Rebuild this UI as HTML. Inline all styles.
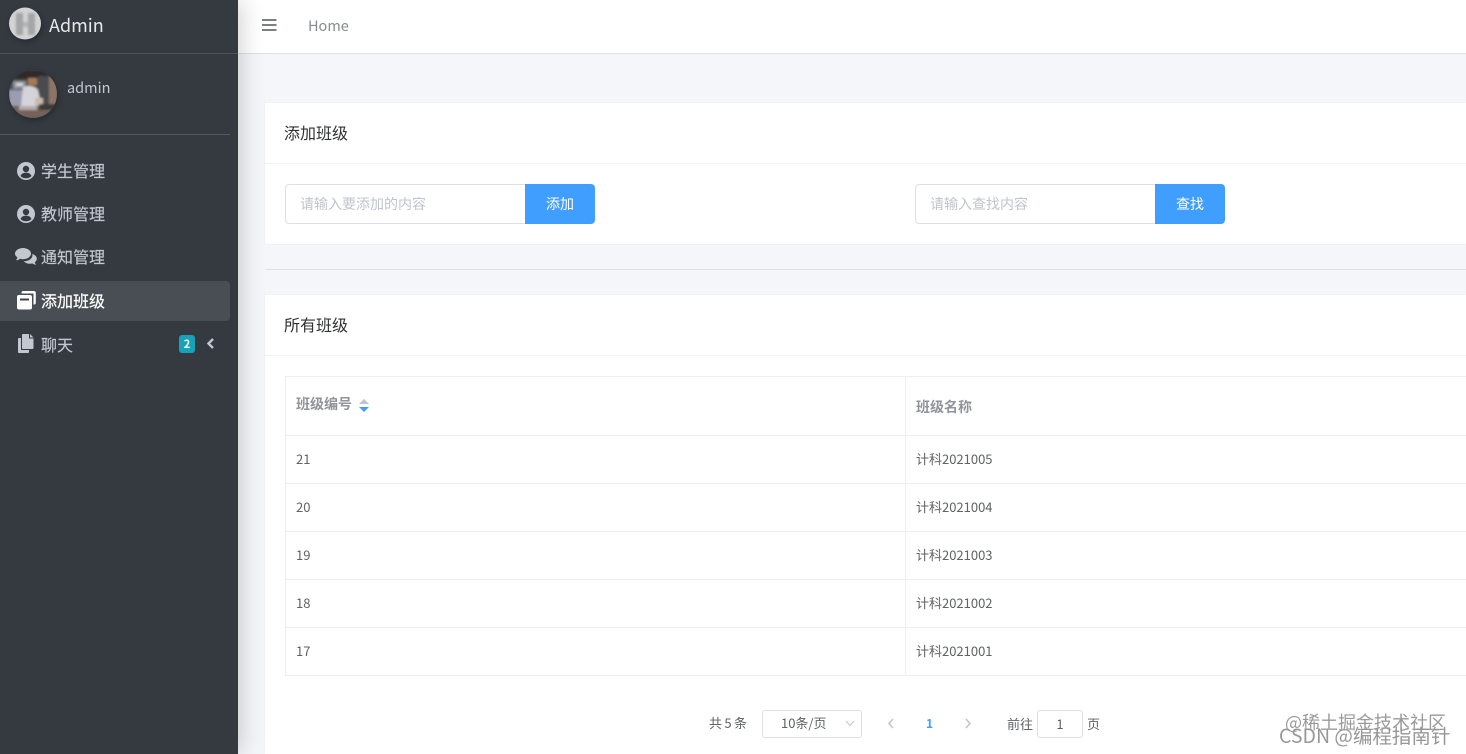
<!DOCTYPE html>
<html lang="zh"><head><meta charset="utf-8"><title>Admin</title>
<style>
*{box-sizing:border-box}
html,body{margin:0;padding:0;width:1466px;height:754px;overflow:hidden}
body{position:relative;background:#f4f6f9;font-family:"Noto Sans CJK SC","Liberation Sans",sans-serif;color:#212529}
#wrap{position:absolute;left:0;top:0;width:1466px;height:754px;overflow:hidden}
.a{position:absolute;white-space:nowrap}
#side{left:0;top:0;width:238px;height:754px;background:#343a40;box-shadow:2px 0 24px rgba(0,0,0,.2)}
.mi{left:41px;font-size:16px;line-height:24px;color:#c2c7d0;-webkit-text-stroke:.15px #c2c7d0}
.ic{position:absolute}
.card{left:265px;width:1201px;background:#fff;box-shadow:0 0 2px rgba(0,0,0,.06)}
.t{font-size:16px;line-height:22px;color:#303133}
.inp{height:40px;width:241px;background:#fff;border:1px solid #dcdfe6;border-radius:4px 0 0 4px;font-size:14px;line-height:38px;color:#c0c4cc;padding-left:15px}
.btn{height:40px;width:70px;background:#409eff;border-radius:0 4px 4px 0;color:#fff;font-size:14px;line-height:40px;text-align:center}
.cell{font-size:13px;line-height:18px;color:#606266}
.hd{font-size:14px;line-height:18px;color:#909399;font-weight:700}
.hl{left:286px;width:1180px;height:1px;background:#ebeef5}
.pg{font-size:13px;line-height:18px;color:#606266}
</style></head>
<body><div id="wrap">
<div class="a" style="left:238px;top:0;width:1228px;height:54px;background:#fff;border-bottom:1px solid #dee2e6"></div>
<svg class="a" style="left:262px;top:19px" width="15" height="13" viewBox="0 0 15 13"><path d="M0 1h14.500M0 6h14.500M0 11h14.500" stroke="#7b7f84" stroke-width="2"/></svg>
<div class="a" style="left:308px;top:15px;font-size:14.500px;line-height:22px;color:#858b91">Home</div>

<div class="a" id="side"></div>
<svg class="a" style="left:9px;top:7px;filter:drop-shadow(1px 2px 3px rgba(0,0,0,.3))" width="32" height="33" viewBox="0 0 32 33"><defs><clipPath id="c1"><circle cx="16" cy="16.500" r="16"/></clipPath><filter id="b1"><feGaussianBlur stdDeviation="1"/></filter></defs><circle cx="16" cy="16.500" r="16" fill="#d2d3d3"/><g clip-path="url(#c1)" filter="url(#b1)"><path d="M7 6h7v9h5V6h7v22h-7v-8h-5v8H7z" fill="#a4a6a7"/><path d="M14 15h5v5h-5z" fill="#b4b6b6"/></g></svg>
<div class="a" style="left:49px;top:12px;font-size:18px;line-height:26px;color:#e6e8ea">Admin</div>
<div class="a" style="left:0;top:53px;width:238px;height:1px;background:#4b545c"></div>

<svg class="a" style="left:9px;top:70px;filter:drop-shadow(1px 2px 3px rgba(0,0,0,.3))" width="48" height="48" viewBox="0 0 48 48"><defs><clipPath id="c2"><circle cx="24" cy="24" r="24"/></clipPath><filter id="b"><feGaussianBlur stdDeviation="1"/></filter></defs><g clip-path="url(#c2)"><rect width="48" height="48" fill="#5a5a60"/><g filter="url(#b)"><rect x="0" y="0" width="48" height="9" fill="#2d2b2a"/><rect x="0" y="9" width="30" height="9" fill="#48494e"/><rect x="29" y="6" width="11" height="30" fill="#4a4b50"/><rect x="40" y="6" width="8" height="30" fill="#8d7566"/><rect x="19" y="8" width="9" height="7" fill="#a87a52"/><rect x="4" y="11" width="13" height="8" fill="#8d9098"/><rect x="7" y="13" width="7" height="3" fill="#d5d6da"/><rect x="0" y="20" width="16" height="16" fill="#9a9cb2"/><path d="M14 17c6-2 12-1 15 3l3 14-12 4-8-2z" fill="#d6d4da"/><path d="M26 28h8v8h-8z" fill="#c9bcae"/><rect x="0" y="37" width="48" height="11" fill="#75625a"/><rect x="30" y="34" width="18" height="6" fill="#3a3a38"/><rect x="10" y="36" width="18" height="4" fill="#b5aca8"/></g></g></svg>
<div class="a" style="left:67px;top:77px;font-size:14.500px;line-height:21px;color:#c2c7d0">admin</div>
<div class="a" style="left:0;top:134px;width:230px;height:1px;background:#4f5962"></div>

<svg class="a" style="left:17px;top:162px" width="18" height="18" viewBox="0 0 18 18"><circle cx="9" cy="9" r="9" fill="#c2c7d0"/><circle cx="9" cy="7" r="3.200" fill="#343a40"/><path d="M3.500 14c1-2.600 3-3.300 5.500-3.300s4.500.7 5.500 3.300c-1.400 1.500-3.300 2.300-5.500 2.300s-4.100-.8-5.500-2.300z" fill="#343a40"/></svg>
<div class="a mi" style="top:158px">学生管理</div>
<svg class="a" style="left:17px;top:205px" width="18" height="18" viewBox="0 0 18 18"><circle cx="9" cy="9" r="9" fill="#c2c7d0"/><circle cx="9" cy="7" r="3.200" fill="#343a40"/><path d="M3.500 14c1-2.600 3-3.300 5.500-3.300s4.500.7 5.500 3.300c-1.400 1.500-3.300 2.300-5.500 2.300s-4.100-.8-5.500-2.300z" fill="#343a40"/></svg>
<div class="a mi" style="top:201px">教师管理</div>
<svg class="a" style="left:15px;top:248px" width="22" height="18" viewBox="0 0 22 18"><path d="M8 0c4.400 0 8 2.500 8 5.600s-3.600 5.600-8 5.600c-1 0-1.900-.1-2.800-.4C4 11.700 2.500 12.300.8 12.300c1-1 1.500-2 1.600-2.900C.9 8.400 0 7.100 0 5.600 0 2.500 3.600 0 8 0z" fill="#c2c7d0"/><path d="M17.300 6c2.700.7 4.500 2.600 4.500 4.700 0 1.400-.8 2.600-2 3.500.1.900.6 1.800 1.500 2.600-1.500 0-2.900-.5-4-1.400-.7.200-1.500.3-2.300.3-2.600 0-4.900-1-6.200-2.500 5 .2 9.500-3 8.500-7.200z" fill="#c2c7d0"/></svg>
<div class="a mi" style="top:244px">通知管理</div>
<div class="a" style="left:0;top:281px;width:230px;height:40px;background:rgba(255,255,255,.1);border-radius:0 4px 4px 0"></div>
<svg class="a" style="left:17px;top:291px" width="19" height="19" viewBox="0 0 19 19"><path d="M6 0h11c1 0 1.800.8 1.800 1.800v10c0 1-.8 1.800-1.800 1.800h-.5V2.500H4.500V1.500C4.500.700 5.200 0 6 0z" fill="#fff"/><rect x="0" y="4" width="15" height="14.500" rx="2" fill="#fff"/><rect x="3" y="7.500" width="9" height="2" fill="#3e444a"/></svg>
<div class="a mi" style="top:288px;color:#fff;-webkit-text-stroke:.2px #fff">添加班级</div>
<svg class="a" style="left:18px;top:334px" width="16" height="19" viewBox="0 0 16 19"><path d="M5 0h6v4.500h4.500V14c0 .6-.4 1-1 1H5c-.6 0-1-.4-1-1V1c0-.6.4-1 1-1zM12 0l3.500 3.500H12z" fill="#c2c7d0"/><path d="M0 5c0-.6.4-1 1-1h2v11.500c0 .3.300.5.500.5H11v2c0 .6-.4 1-1 1H1c-.6 0-1-.4-1-1z" fill="#c2c7d0"/></svg>
<div class="a mi" style="top:332px">聊天</div>
<div class="a" style="left:179px;top:335px;width:16px;height:18px;background:#17a2b8;border-radius:3px;color:#fff;font-size:11px;font-weight:700;line-height:18px;text-align:center">2</div>
<svg class="a" style="left:206px;top:338px" width="9" height="11" viewBox="0 0 9 11"><path d="M7 1L2.500 5.500 7 10" fill="none" stroke="#c2c7d0" stroke-width="2.400"/></svg>

<div class="a card" style="top:103px;height:141px"></div>
<div class="a t" style="left:284px;top:121px">添加班级</div>
<div class="a" style="left:265px;top:163px;width:1201px;height:1px;background:#f1f2f4"></div>
<div class="a inp" style="left:285px;top:184px;padding-left:15px;text-indent:-1px">请输入要添加的内容</div>
<div class="a btn" style="left:525px;top:184px">添加</div>
<div class="a inp" style="left:915px;top:184px;text-indent:-1px">请输入查找内容</div>
<div class="a btn" style="left:1155px;top:184px">查找</div>

<div class="a" style="left:265px;top:269px;width:1201px;height:1px;background:#dee2e6"></div>

<div class="a card" style="top:295px;height:459px"></div>
<div class="a t" style="left:284px;top:313px">所有班级</div>
<div class="a" style="left:265px;top:355px;width:1201px;height:1px;background:#f1f2f4"></div>

<div class="a hl" style="top:376px;left:285px;width:1181px"></div>
<div class="a hl" style="top:435px;left:285px;width:1181px"></div>
<div class="a hl" style="top:483px;left:285px;width:1181px"></div>
<div class="a hl" style="top:531px;left:285px;width:1181px"></div>
<div class="a hl" style="top:579px;left:285px;width:1181px"></div>
<div class="a hl" style="top:627px;left:285px;width:1181px"></div>
<div class="a hl" style="top:675px;left:285px;width:1181px"></div>
<div class="a" style="left:285px;top:376px;width:1px;height:300px;background:#ebeef5"></div>
<div class="a" style="left:905px;top:376px;width:1px;height:300px;background:#ebeef5"></div>

<div class="a hd" style="left:296px;top:395px">班级编号</div>
<svg class="a" style="left:358px;top:399px" width="12" height="14" viewBox="0 0 12 14"><path d="M6 0l5 5H1z" fill="#c0c4cc"/><path d="M6 13l5-5H1z" fill="#409eff"/></svg>
<div class="a hd" style="left:916px;top:398px">班级名称</div>

<div class="a cell" style="left:296px;top:450px">21</div><div class="a cell" style="left:916px;top:450px">计科2021005</div>
<div class="a cell" style="left:296px;top:498px">20</div><div class="a cell" style="left:916px;top:498px">计科2021004</div>
<div class="a cell" style="left:296px;top:546px">19</div><div class="a cell" style="left:916px;top:546px">计科2021003</div>
<div class="a cell" style="left:296px;top:594px">18</div><div class="a cell" style="left:916px;top:594px">计科2021002</div>
<div class="a cell" style="left:296px;top:642px">17</div><div class="a cell" style="left:916px;top:642px">计科2021001</div>

<div class="a pg" style="left:709px;top:714px;word-spacing:-.5px">共 5 条</div>
<div class="a" style="left:762px;top:710px;width:100px;height:28px;border:1px solid #dcdfe6;border-radius:3px"></div>
<div class="a pg" style="left:781px;top:714px">10条/页</div>
<svg class="a" style="left:845px;top:720px" width="10" height="7" viewBox="0 0 10 7"><path d="M1 1l4 4.500L9 1" fill="none" stroke="#c0c4cc"/></svg>
<svg class="a" style="left:887px;top:718px" width="8" height="11" viewBox="0 0 8 11"><path d="M6 1L2 5.500 6 10" fill="none" stroke="#c0c4cc" stroke-width="1.500"/></svg>
<div class="a" style="left:926px;top:715px;font-size:12px;font-weight:700;line-height:18px;color:#409eff">1</div>
<svg class="a" style="left:964px;top:718px" width="8" height="11" viewBox="0 0 8 11"><path d="M2 1l4 4.500L2 10" fill="none" stroke="#c0c4cc" stroke-width="1.500"/></svg>
<div class="a pg" style="left:1007px;top:715px">前往</div>
<div class="a" style="left:1037px;top:710px;width:46px;height:28px;border:1px solid #dcdfe6;border-radius:3px;text-align:center;font-size:13px;line-height:26px;color:#606266">1</div>
<div class="a pg" style="left:1087px;top:715px">页</div>

<div class="a" style="left:1285px;top:711px;font-size:18px;line-height:22px;color:rgba(120,120,120,.75);text-shadow:0 0 1px #fff">@稀土掘金技术社区</div>
<div class="a" style="left:1279px;top:723px;font-size:19.500px;line-height:24px;color:rgba(125,125,125,.8);text-shadow:0 0 1px #fff">CSDN @编程指南针</div>
</div></body></html>
